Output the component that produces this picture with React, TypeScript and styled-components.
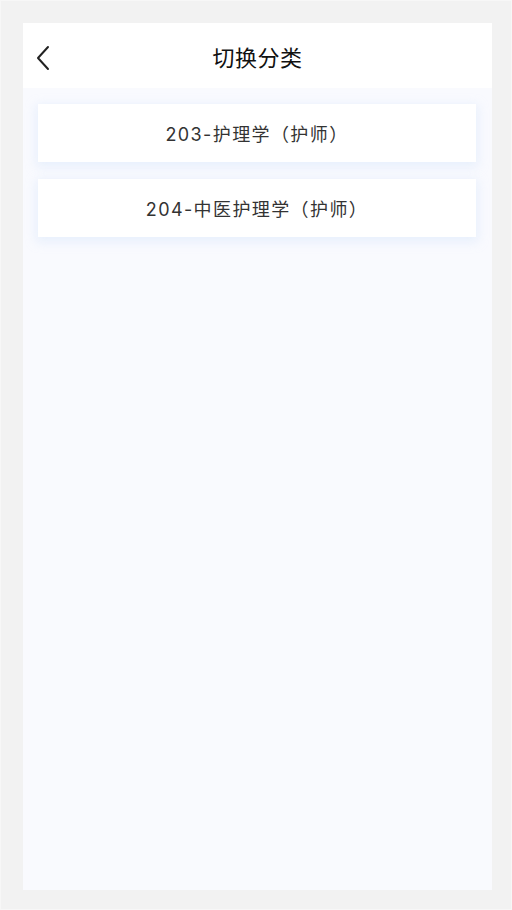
import React from "react";
import styled, { createGlobalStyle } from "styled-components";

const GlobalStyle = createGlobalStyle`
	html, body {
		margin: 0;
		padding: 0;
		background: #f2f2f2;
	}
	body {
		font-family: Inter, "Noto Sans CJK SC", "Noto Sans", sans-serif;
	}
`;

const categories = ["203-护理学（护师）", "204-中医护理学（护师）"];

export default function App() {
	return (
		<>
			<GlobalStyle />
			<StyledPage>
				<StyledScreen>
					<StyledHeader>
						<StyledBack aria-label="back">
							<svg width="16" height="26" viewBox="0 0 16 26" fill="none">
								<path d="M13 2 L3 13 L13 24" stroke="#222" strokeWidth="2" strokeLinecap="round" strokeLinejoin="round" />
							</svg>
						</StyledBack>
						<StyledTitle>切换分类</StyledTitle>
					</StyledHeader>
					<StyledList>
						{categories.map((c) => (
							<StyledCard key={c}>{c}</StyledCard>
						))}
					</StyledList>
				</StyledScreen>
			</StyledPage>
		</>
	);
}

const StyledPage = styled.div`
	box-sizing: border-box;
	width: 512px;
	height: 910px;
	padding: 22px 19px 19px 22px;
	border: 1px solid #f7f7f7;
`;

const StyledScreen = styled.div`
	height: 100%;
	display: flex;
	flex-direction: column;
	background: #f9fafe;
`;

const StyledHeader = styled.header`
	position: relative;
	height: 65px;
	flex-shrink: 0;
	display: flex;
	align-items: center;
	justify-content: center;
	background: #fff;
`;

const StyledBack = styled.div`
	position: absolute;
	left: 12px;
	top: 22px;
	display: flex;
`;

const StyledTitle = styled.h1`
	margin: 0;
	font-size: 22px;
	font-weight: 400;
	color: #111;
	letter-spacing: 0.5px;
`;

const StyledList = styled.div`
	display: flex;
	flex-direction: column;
	gap: 17px;
	padding: 16px 16px 0 15px;
`;

const StyledCard = styled.div`
	height: 58px;
	display: flex;
	align-items: center;
	justify-content: center;
	background: #fff;
	font-size: 18px;
	letter-spacing: 1.4px;
	color: #333;
	box-shadow: 0 3px 10px 2px rgba(200, 220, 250, 0.35);
`;
